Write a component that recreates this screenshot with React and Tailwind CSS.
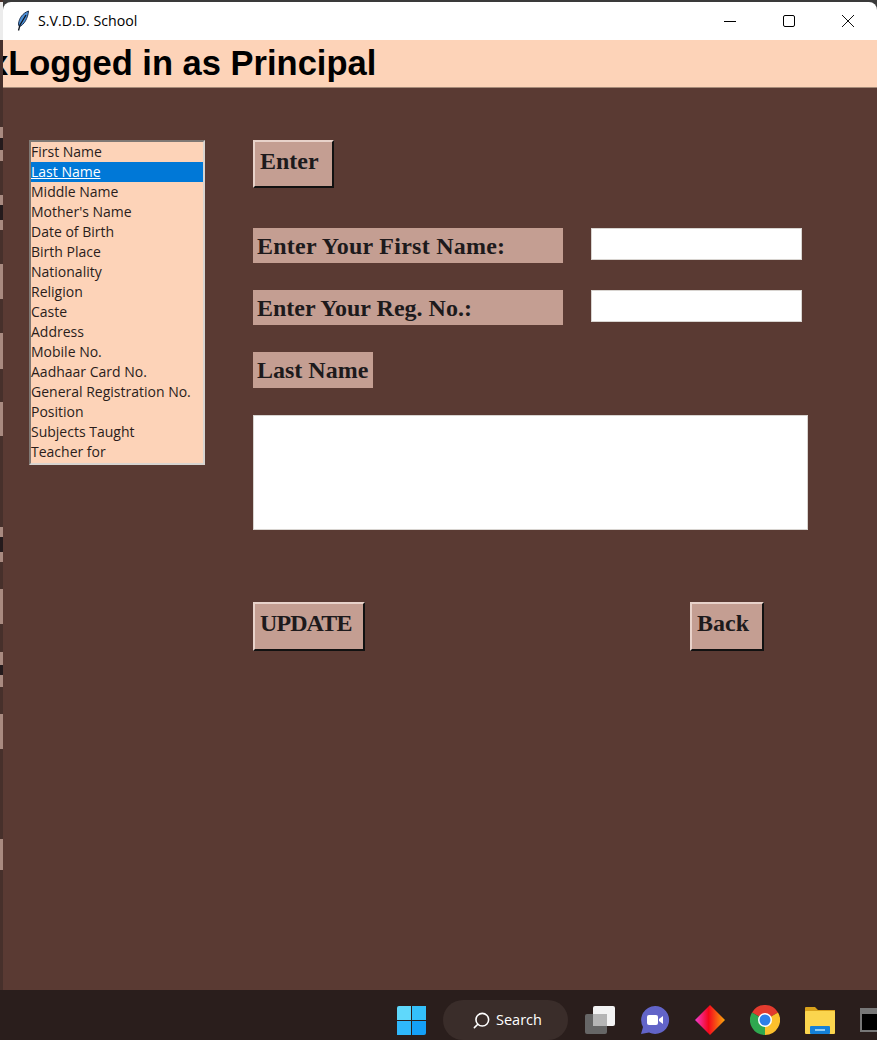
import { Search } from 'lucide-react';

const fields = [
  'First Name', 'Last Name', 'Middle Name', "Mother's Name", 'Date of Birth', 'Birth Place',
  'Nationality', 'Religion', 'Caste', 'Address', 'Mobile No.', 'Aadhaar Card No.',
  'General Registration No.', 'Position', 'Subjects Taught', 'Teacher for',
];

// bits of the window behind that show down the left edge: [top, bottom, dark bar height]
const edgeBits = [
  [127, 161, 12], [195, 230, 15], [264, 299, 0], [333, 369, 0], [402, 436, 0],
  [527, 562, 15], [589, 624, 0], [652, 687, 10], [714, 749, 0], [839, 870, 0],
];

const serif = "font-['Liberation_Serif',serif] font-bold text-[#1d1a1c]";
const raised = 'bg-[#c49e92] border-t-2 border-l-2 border-t-[#e8d2ca] border-l-[#e8d2ca] border-r-2 border-b-2 border-r-[#111] border-b-[#111]';

function Feather() {
  return (
    <svg width="16" height="22" viewBox="0 0 16 22">
      <path d="M13.500 1C8 3 4 8 3.500 14c0 1 .3 2 .8 2.600C9 15 13 8 13.500 1z" fill="#4a8fd8" stroke="#20324f" strokeWidth="1" />
      <path d="M11 5 5 15l-1.500 5.500" fill="none" stroke="#11151c" strokeWidth="1.300" />
    </svg>
  );
}

function WindowButtons() {
  return (
    <div className="flex items-center ml-auto">
      <div className="w-[58px] h-[38px] flex items-center justify-center">
        <div className="w-3 h-px bg-black" />
      </div>
      <div className="w-[59px] h-[38px] flex items-center justify-center">
        <div className="w-[12px] h-[12px] border border-black rounded-[2px]" />
      </div>
      <div className="w-[59px] h-[38px] flex items-center justify-center">
        <svg width="14" height="14" viewBox="0 0 14 14">
          <path d="M1 1l12 12M13 1 1 13" stroke="#111" strokeWidth="1" />
        </svg>
      </div>
    </div>
  );
}

function Taskbar() {
  return (
    <div className="h-[50px] shrink-0 bg-[#2a1e1c] overflow-hidden">
      <div className="h-[60px] flex items-center pl-[397px]">
        <div className="w-[29px] h-[29px] shrink-0 grid grid-cols-2 gap-[1px]">
          <div className="bg-[#5fd8fb] rounded-tl-[2px]" />
          <div className="bg-[#34c0fa]" />
          <div className="bg-[#2fb8fb]" />
          <div className="bg-[#14a0f8] rounded-br-[2px]" />
        </div>
        <div className="ml-[17px] w-[125px] h-[40px] shrink-0 rounded-full bg-[#3a2d2a] flex items-center pl-[29px] gap-[5px] text-white text-[14.5px] font-['Open_Sans',sans-serif]">
          <Search size={19} strokeWidth={2} className="text-white -scale-x-100" />
          <span>Search</span>
        </div>
        <svg className="ml-[17px] shrink-0" width="30" height="28" viewBox="0 0 30 28">
          <rect x="0" y="8" width="22" height="20" rx="2" fill="#666" />
          <rect x="8" y="0" width="22" height="20" rx="2" fill="#f3f3f3" />
          <rect x="8" y="8" width="14" height="12" fill="#b5b5b5" />
        </svg>
        <svg className="ml-[25px] shrink-0" width="30" height="30" viewBox="0 0 30 30">
          <path d="M15 1a14 14 0 1 1-6 26.600L1 29l2-7A14 14 0 0 1 15 1z" fill="#6264c8" />
          <rect x="7" y="10" width="11" height="10" rx="2" fill="#fff" />
          <path d="M19 14l4-3v8l-4-3z" fill="#fff" />
        </svg>
        <svg className="ml-[25px] shrink-0" width="30" height="30" viewBox="0 0 30 30">
          <defs>
            <linearGradient id="kite" x1="0" x2="1" y1="0" y2="0">
              <stop offset="0" stopColor="#f23bd0" />
              <stop offset="0.45" stopColor="#f5071c" />
              <stop offset="1" stopColor="#f9a80b" />
            </linearGradient>
          </defs>
          <path d="M15 0l15 15-15 15L0 15z" fill="url(#kite)" />
        </svg>
        <svg className="ml-[25px] shrink-0" width="30" height="30" viewBox="0 0 30 30">
          <path d="M15 15 2 7.500A15 15 0 0 1 28 7.500z" fill="#e33b2e" />
          <path d="M15 15 2 7.500A15 15 0 0 0 15 30z" fill="#2fa84f" />
          <path d="M15 15 28 7.500A15 15 0 0 1 15 30z" fill="#fbc02d" />
          <circle cx="15" cy="15" r="7" fill="#fff" />
          <circle cx="15" cy="15" r="5.500" fill="#2f7fe8" />
        </svg>
        <svg className="ml-[25px] shrink-0" width="30" height="28" viewBox="0 0 30 28">
          <path d="M0 2a1 1 0 0 1 1-1h9l3 3h17v4H0z" fill="#d9a21b" />
          <rect x="0" y="5" width="30" height="23" rx="1" fill="#fbd54e" />
          <rect x="5" y="20" width="20" height="8" rx="1" fill="#1480d8" />
          <rect x="10" y="23" width="10" height="2" fill="#8ecbf5" />
        </svg>
        <div className="ml-[25px] w-[30px] h-[24px] shrink-0 bg-black border-2 border-[#777] border-t-[6px]" />
      </div>
    </div>
  );
}

export default function App() {
  return (
    <div className="w-[877px] h-[1040px] flex flex-col overflow-hidden bg-[#3a3a3a]">
      <div className="flex-1 flex min-h-0">
        {/* left edge, what's behind the window */}
        <div className="w-[3px] shrink-0 bg-[#47302b] flex flex-col">
          <div className="h-[38px] mt-[2px] shrink-0 bg-[#ececec]" />
          {edgeBits.map(([top, bottom, bar], i) => (
            <div
              key={top}
              className="shrink-0 bg-[#a98a80] flex items-center"
              style={{ height: bottom - top, marginTop: top - (i ? edgeBits[i - 1][1] : 40) }}
            >
              {bar > 0 && <div className="w-full bg-[#241a1c]" style={{ height: bar }} />}
            </div>
          ))}
        </div>

        <div className="flex-1 flex flex-col mt-[2px] min-w-0">
          <div className="h-[38px] shrink-0 bg-white rounded-t-[8px] flex items-center pl-[12px]">
            <Feather />
            <span className="ml-[7px] text-[14.2px] text-black font-['Open_Sans',sans-serif]">S.V.D.D. School</span>
            <WindowButtons />
          </div>

          <div className="h-[48px] shrink-0 bg-[#fdd3b8] border-b border-b-[#a58a78] flex items-center whitespace-nowrap overflow-hidden">
            <h1 className="ml-[-14px] text-[34.5px] leading-none font-bold text-black font-['Liberation_Sans',sans-serif]">xLogged in as Principal</h1>
          </div>

          <main className="flex-1 bg-[#5a3a33] pl-[26px] pt-[52px] flex items-start">
            <ul className="w-[176px] h-[325px] shrink-0 bg-[#fdd3b8] border-2 border-[#7f7874] border-b-[#d8d4d0] border-r-[#d8d4d0] font-['Open_Sans',sans-serif] text-[14px] leading-[20px] text-[#2a1d1b]">
              {fields.map((f, i) => (
                <li key={f} className={`h-[20px] whitespace-nowrap ${i === 1 ? 'bg-[#0078d7] text-white underline' : ''}`}>
                  {f}
                </li>
              ))}
            </ul>

            <div className="ml-[48px] w-[555px] flex flex-col items-start">
              <button className={`w-[81px] h-[48px] pl-[5px] pb-[7px] text-left text-[24px] ${serif} ${raised}`}>Enter</button>

              <div className="mt-[40px] flex items-start">
                <div className={`w-[310px] h-[35px] bg-[#c49e92] pl-[4px] text-[24px] leading-[37px] tracking-[0.25px] ${serif}`}>Enter Your First Name:</div>
                <input className="ml-[28px] w-[211px] h-[32px] bg-white border border-[#d8d4d0] outline-none" />
              </div>

              <div className="mt-[27px] flex items-start">
                <div className={`w-[310px] h-[35px] bg-[#c49e92] pl-[4px] text-[24px] leading-[37px] ${serif}`}>Enter Your Reg. No.:</div>
                <input className="ml-[28px] w-[211px] h-[32px] bg-white border border-[#d8d4d0] outline-none" />
              </div>

              <div className={`mt-[27px] w-[120px] h-[36px] bg-[#c49e92] pl-[4px] text-[24px] leading-[37px] ${serif}`}>Last Name</div>

              <textarea className="mt-[27px] w-[555px] h-[115px] bg-white border border-[#d8d4d0] outline-none resize-none block" />

              <div className="mt-[72px] w-[511px] flex justify-between">
                <button className={`w-[112px] h-[49px] pl-[5px] pb-[7px] text-left text-[24px] tracking-[-0.9px] ${serif} ${raised}`}>UPDATE</button>
                <button className={`w-[74px] h-[49px] pl-[5px] pb-[7px] text-left text-[24px] ${serif} ${raised}`}>Back</button>
              </div>
            </div>
          </main>
        </div>
      </div>
      <Taskbar />
    </div>
  );
}
